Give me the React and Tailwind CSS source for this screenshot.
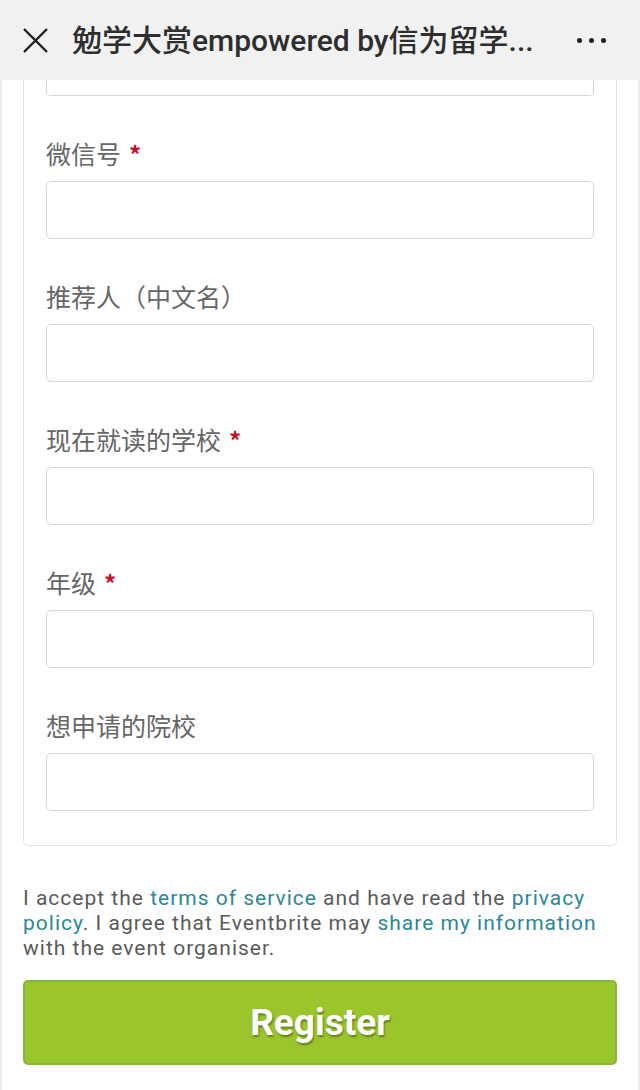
const fields = [
    { label: '微信号', required: true },
    { label: '推荐人（中文名）', required: false },
    { label: '现在就读的学校', required: true },
    { label: '年级', required: true },
    { label: '想申请的院校', required: false },
];

const cjk = { fontFamily: '"Noto Sans CJK SC", "Noto Sans", sans-serif' };
const roboto = { fontFamily: 'Roboto, "Noto Sans CJK SC", sans-serif' };

const Header = () => (
    <div className="h-[80px] bg-[#f1f1f1] flex items-center pl-[22px] pr-[34px]">
        <svg width="27" height="27" viewBox="0 0 27 27" className="shrink-0">
            <path d="M2 2 L25 25 M25 2 L2 25" stroke="#1f1f1f" strokeWidth="2.4" fill="none" />
        </svg>
        <div
            className="ml-[23px] flex-1 text-[30px] text-[#2e2e2e] font-medium whitespace-nowrap overflow-hidden"
            style={roboto}
        >
            勉学大赏empowered by信为留学...
        </div>
        <div className="flex gap-[7px] items-center">
            <span className="w-[5px] h-[5px] rounded-full bg-[#222]" />
            <span className="w-[5px] h-[5px] rounded-full bg-[#222]" />
            <span className="w-[5px] h-[5px] rounded-full bg-[#222]" />
        </div>
    </div>
);

const Field = ({ label, required }) => (
    <div className="pt-[40px]">
        <div className="h-[34px] leading-[34px] text-[25px] text-[#666]" style={cjk}>
            {label}
            {required && <span className="ml-[8px] text-[#c8102e] text-[24px] font-bold">*</span>}
        </div>
        <div className="mt-[11px] h-[58px] border border-[#d6d6d6] rounded-[5px] bg-white" />
    </div>
);

export default function App() {
    return (
        <div className="w-[640px] h-[1090px] bg-white overflow-hidden relative">
            <Header />
            <div className="border-l-[2px] border-r-[2px] border-[#ececec] h-[1010px] px-[21px]">
                {/* form card, scrolled */}
                <div className="border border-t-0 border-[#e2e2e2] rounded-b-[5px] px-[22px] pb-[34px]">
                    <div className="h-[16px] border border-t-0 border-[#d6d6d6] rounded-b-[5px]" />
                    {fields.map((f) => (
                        <Field key={f.label} {...f} />
                    ))}
                </div>

                <p
                    className="mt-[40px] text-[21px] leading-[25px] text-[#5a5a5a] tracking-[1px]"
                    style={roboto}
                >
                    I accept the <span className="text-[#2b8796]">terms of service</span> and have read the{' '}
                    <span className="text-[#2b8796]">privacy policy</span>. I agree that Eventbrite may{' '}
                    <span className="text-[#2b8796]">share my information</span> with the event organiser.
                </p>

                <button
                    className="mt-[19px] w-full h-[85px] bg-[#9bc62b] border-2 border-[#86b63e] rounded-[5px] text-white text-[37px] font-bold"
                    style={{ ...roboto, textShadow: '1px 2px 2px rgba(60,80,20,0.6)' }}
                >
                    Register
                </button>
            </div>
        </div>
    );
}
